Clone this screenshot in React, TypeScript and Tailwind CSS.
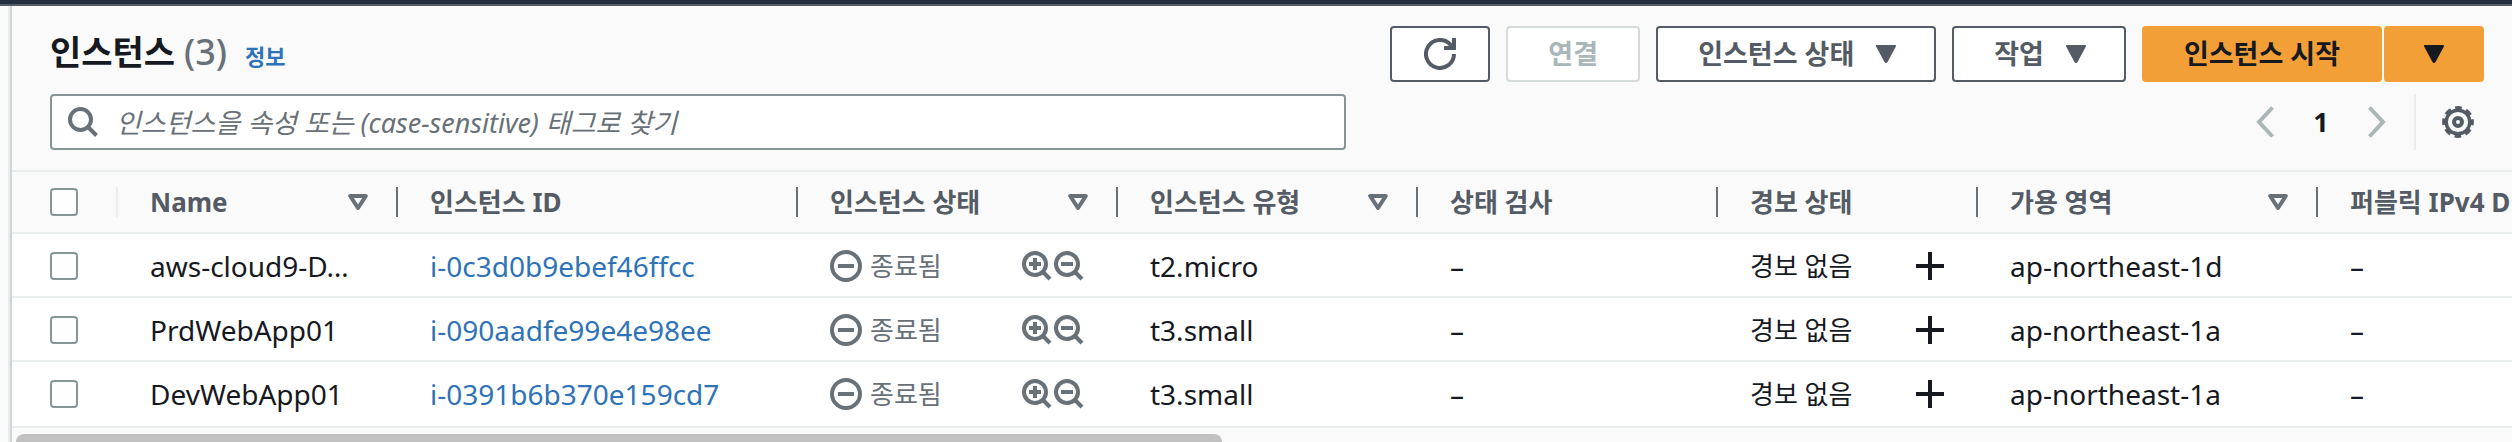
import React from "react";

const FONT = "font-['Noto_Sans','Noto_Sans_CJK_KR',sans-serif]";

type IconProps = { className?: string };

function CaretDown({ className = "" }: IconProps) {
  return (
    <svg viewBox="0 0 20 18" className={`h-[18px] w-5 shrink-0 ${className}`} aria-hidden="true">
      <path d="M1 1 H19 L10.8 16.4 Q10 17.4 9.2 16.4 Z" fill="currentColor" stroke="currentColor" strokeWidth="2" strokeLinejoin="round" />
    </svg>
  );
}

function SortIcon() {
  return (
    <svg viewBox="0 0 20 16" className="h-4 w-5 shrink-0 text-[#687078]" aria-hidden="true">
      <path d="M2.2 2 H17.8 L10 14 Z" fill="none" stroke="currentColor" strokeWidth="4" strokeLinejoin="round" />
    </svg>
  );
}

function RefreshIcon() {
  return (
    <svg viewBox="0 0 32 32" className="size-8" fill="none" stroke="currentColor" strokeWidth="4" aria-hidden="true">
      <path d="M30 16 A14 14 0 1 1 26.5 6.7 L29 10" />
      <path d="M30 0 V10 H20" />
    </svg>
  );
}

function SearchIcon() {
  return (
    <svg viewBox="0 0 30 30" className="size-[30px] shrink-0" fill="none" stroke="currentColor" strokeWidth="4" aria-hidden="true">
      <circle cx="12.5" cy="12.5" r="10.5" />
      <path d="M19.5 19.5 L28.5 28.5" />
    </svg>
  );
}

function MagnifierIcon({ plus }: { plus: boolean }) {
  return (
    <svg viewBox="0 0 30 30" className="size-[30px] shrink-0" fill="none" stroke="currentColor" strokeWidth="4" aria-hidden="true">
      <circle cx="13" cy="13" r="11" />
      <path d={plus ? "M7 13 H19 M13 7 V19" : "M7 13 H19"} />
      <path d="M21 21 L28 28" />
    </svg>
  );
}

function MinusCircleIcon() {
  return (
    <svg viewBox="0 0 32 32" className="size-8 shrink-0" fill="none" stroke="currentColor" strokeWidth="4" aria-hidden="true">
      <circle cx="16" cy="16" r="14" />
      <path d="M8 16 H24" />
    </svg>
  );
}

function PlusIcon() {
  return (
    <svg viewBox="0 0 28 28" className="size-7" fill="none" stroke="currentColor" strokeWidth="4" aria-hidden="true">
      <path d="M0 14 H28 M14 0 V28" />
    </svg>
  );
}

function Chevron({ left }: { left: boolean }) {
  return (
    <svg viewBox="0 0 18 32" className="h-8 w-[18px]" fill="none" stroke="currentColor" strokeWidth="4" aria-hidden="true">
      <path d={left ? "M16.5 1.5 L3 16 L16.5 30.5" : "M1.5 1.5 L15 16 L1.5 30.5"} />
    </svg>
  );
}

function GearIcon() {
  return (
    <svg viewBox="0 0 32 32" className="size-8" fill="none" stroke="currentColor" aria-hidden="true">
      <circle cx="16" cy="16" r="11.8" strokeWidth="3.4" />
      <circle cx="16" cy="16" r="14.2" strokeWidth="3.4" strokeDasharray="6.6 4.553" strokeDashoffset="3.3" />
      <circle cx="16" cy="16" r="4" strokeWidth="4" />
    </svg>
  );
}

type Column = { label: string; width: string; sortable: boolean };

const columns: Column[] = [
  { label: "Name", width: "w-[280px]", sortable: true },
  { label: "인스턴스 ID", width: "w-[400px]", sortable: false },
  { label: "인스턴스 상태", width: "w-[320px]", sortable: true },
  { label: "인스턴스 유형", width: "w-[300px]", sortable: true },
  { label: "상태 검사", width: "w-[300px]", sortable: false },
  { label: "경보 상태", width: "w-[260px]", sortable: false },
  { label: "가용 영역", width: "w-[340px]", sortable: true },
  { label: "퍼블릭 IPv4 DNS", width: "w-[400px]", sortable: false },
];

const instances = [
  { name: "aws-cloud9-D…", id: "i-0c3d0b9ebef46ffcc", type: "t2.micro", zone: "ap-northeast-1d" },
  { name: "PrdWebApp01", id: "i-090aadfe99e4e98ee", type: "t3.small", zone: "ap-northeast-1a" },
  { name: "DevWebApp01", id: "i-0391b6b370e159cd7", type: "t3.small", zone: "ap-northeast-1a" },
];

const BUTTON = "flex h-14 items-center justify-center rounded-[4px] border-2 text-[27px] font-bold whitespace-nowrap";
const MENU_BUTTON = "gap-[22px] border-[#545b64] bg-white pl-10 pr-[38px] text-[#545b64]";
const CELL = "h-16 border-y-2 border-t-transparent border-b-[#eaeded] pl-8 text-[28px] leading-9 whitespace-nowrap";

function Checkbox({ label }: { label: string }) {
  return (
    <input
      type="checkbox"
      aria-label={label}
      className="block size-7 appearance-none rounded-[4px] border-2 border-[#879596] bg-white checked:bg-[#0073bb]"
    />
  );
}

function Toolbar() {
  return (
    <div className="flex items-start justify-between pt-5">
      <div className="flex items-baseline">
        <h2 className="text-[34px] leading-[52px] font-bold">
          인스턴스 <span className="text-[36px] font-medium text-[#687078]">(3)</span>
        </h2>
        <a href="#info" className="ml-[18px] text-[22px] font-bold text-[#2e73b8]">정보</a>
      </div>
      <div className="flex gap-4">
        <button type="button" aria-label="새로 고침" className={`${BUTTON} w-[100px] border-[#545b64] bg-white text-[#545b64]`}>
          <RefreshIcon />
        </button>
        <button type="button" disabled className={`${BUTTON} w-[134px] border-[#d5dbdb] bg-white text-[#aab7b8]`}>
          연결
        </button>
        <button type="button" className={`${BUTTON} ${MENU_BUTTON}`}>
          인스턴스 상태 <CaretDown />
        </button>
        <button type="button" className={`${BUTTON} ${MENU_BUTTON}`}>
          작업 <CaretDown />
        </button>
        <div className="flex gap-[2px]">
          <button type="button" className={`${BUTTON} border-[#f29f38] bg-[#f29f38] px-10 text-[#16191f]`}>
            인스턴스 시작
          </button>
          <button type="button" aria-label="시작 옵션" className={`${BUTTON} w-[100px] border-[#f29f38] bg-[#f29f38] text-[#16191f]`}>
            <CaretDown />
          </button>
        </div>
      </div>
    </div>
  );
}

function FilterRow() {
  return (
    <div className="flex items-center justify-between pt-3 pb-5">
      <label className="flex h-14 w-[1296px] items-center gap-[18px] rounded-[4px] border-2 border-[#879596] bg-white pl-4 text-[#687078]">
        <SearchIcon />
        <input
          type="text"
          aria-label="인스턴스 찾기"
          placeholder="인스턴스을 속성 또는 (case-sensitive) 태그로 찾기"
          className="h-full min-w-0 flex-1 bg-transparent text-[27px] italic outline-none placeholder:text-[#687078]"
        />
      </label>
      <div className="flex h-14 items-center pr-[10px] text-[#aab7b8]">
        <button type="button" aria-label="이전 페이지"><Chevron left /></button>
        <span className="w-[94px] text-center text-[27px] font-bold text-[#16191f]">1</span>
        <button type="button" aria-label="다음 페이지"><Chevron left={false} /></button>
        <span className="ml-7 h-full w-[2px] bg-[#eaeded]" />
        <button type="button" aria-label="기본 설정" className="ml-[26px] text-[#545b64]"><GearIcon /></button>
      </div>
    </div>
  );
}

function InstanceTable() {
  return (
    <div className="overflow-hidden border-y-2 border-[#eaeded]">
      <table className="w-[2706px] table-fixed border-separate border-spacing-0 text-left">
        <colgroup>
          <col className="w-[106px]" />
          {columns.map((c) => (
            <col key={c.label} className={c.width} />
          ))}
        </colgroup>
        <thead>
          <tr>
            <th className="h-[62px] border-b-2 border-[#eaeded] p-0">
              <div className="flex h-[30px] items-center border-r-2 border-[#eaeded] pl-[38px]">
                <Checkbox label="모두 선택" />
              </div>
            </th>
            {columns.map((c) => (
              <th key={c.label} scope="col" className="border-b-2 border-[#eaeded] p-0">
                <div className="flex h-[30px] items-center justify-between border-r-2 border-[#687078] pr-7 pl-8 text-[26px] leading-[30px] font-bold whitespace-nowrap text-[#545b64]">
                  {c.label}
                  {c.sortable && <SortIcon />}
                </div>
              </th>
            ))}
          </tr>
        </thead>
        <tbody className="bg-white [&>tr:last-child>td]:border-b-transparent">
          {instances.map((row) => (
            <tr key={row.id}>
              <td className="h-16 border-y-2 border-t-transparent border-b-[#eaeded] pl-[38px]">
                <Checkbox label={row.name} />
              </td>
              <td className={CELL}>{row.name}</td>
              <td className={CELL}>
                <a href={`#${row.id}`} className="text-[#2e73b8]">{row.id}</a>
              </td>
              <td className={`${CELL} pr-[34px]`}>
                <div className="flex items-center justify-between text-[#687078]">
                  <span className="flex items-center gap-2 text-[26px]">
                    <MinusCircleIcon />
                    종료됨
                  </span>
                  <span className="flex gap-[2px]">
                    <button type="button" aria-label="필터에 포함"><MagnifierIcon plus /></button>
                    <button type="button" aria-label="필터에서 제외"><MagnifierIcon plus={false} /></button>
                  </span>
                </div>
              </td>
              <td className={CELL}>{row.type}</td>
              <td className={CELL}>–</td>
              <td className={`${CELL} pr-[34px]`}>
                <div className="flex items-center justify-between text-[26px]">
                  경보 없음
                  <button type="button" aria-label="경보 추가"><PlusIcon /></button>
                </div>
              </td>
              <td className={CELL}>{row.zone}</td>
              <td className={CELL}>–</td>
            </tr>
          ))}
        </tbody>
      </table>
    </div>
  );
}

export default function App() {
  return (
    <div className={`${FONT} overflow-hidden bg-[#fafafa] text-[#16191f]`}>
      <div className="h-[6px] border-b-2 border-[#545b64] bg-[#232f3e]" />
      <div className="flex">
        <div className="w-[10px] shrink-0 border-r-2 border-[#eaebec]" />
        <main className="min-w-0 flex-1 border-l-2 border-[#d0d5d8]">
          <div className="pr-7 pl-[38px]">
            <Toolbar />
            <FilterRow />
          </div>
          <InstanceTable />
          <div className="h-[14px] overflow-hidden px-1 pt-[6px]">
            <div className="h-4 w-[1206px] rounded-full bg-[#c1c1c1]" />
          </div>
        </main>
      </div>
    </div>
  );
}
